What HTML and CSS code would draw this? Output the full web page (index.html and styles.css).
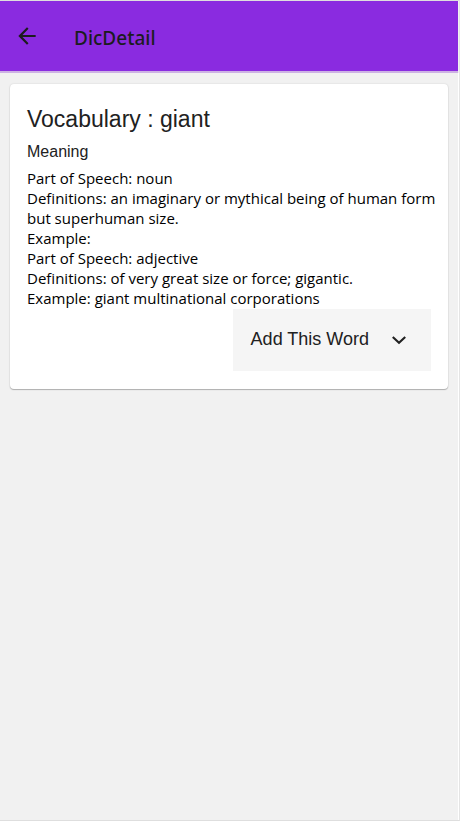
FILE: index.html
```html
<!DOCTYPE html>
<html lang="en">
<head>
<meta charset="utf-8">
<meta name="viewport" content="width=device-width, initial-scale=1">
<title>DicDetail</title>
<link rel="stylesheet" href="styles.css">
</head>
<body>
<div class="screen">
  <header class="app-bar">
    <button class="back" type="button" aria-label="Back">
      <svg viewBox="0 0 24 24" width="26" height="26" aria-hidden="true"><path d="M20 11H7.83l5.59-5.59L12 4l-8 8 8 8 1.41-1.41L7.83 13H20z" fill="currentColor"/></svg>
    </button>
    <h1 class="title">DicDetail</h1>
  </header>
  <main class="content">
    <article class="card">
      <h2 class="word">Vocabulary : giant</h2>
      <h3 class="label">Meaning</h3>
      <div class="meanings">
        <p>Part of Speech: noun</p>
        <p>Definitions: an imaginary or mythical being of human form but superhuman size.</p>
        <p>Example:</p>
        <p>Part of Speech: adjective</p>
        <p>Definitions: of very great size or force; gigantic.</p>
        <p>Example: giant multinational corporations</p>
      </div>
      <button class="add" type="button">
        <span>Add This Word</span>
        <svg viewBox="0 0 24 24" width="22" height="22" aria-hidden="true"><path d="M5.200 9.800l6.800 6.400L18.800 9.800" fill="none" stroke="currentColor" stroke-width="2.300"/></svg>
      </button>
    </article>
  </main>
</div>
</body>
</html>
```
FILE: styles.css
```css
* {
  box-sizing: border-box;
}

body {
  margin: 0;
  background: #fff;
  font-family: "Open Sans", "Noto Sans", sans-serif;
}

h1, h2, h3, p {
  margin: 0;
}

button {
  border: 0;
  font: inherit;
  cursor: pointer;
}

.screen {
  display: flex;
  flex-direction: column;
  min-height: calc(100vh - 1px);
  margin-bottom: 1px;
  border-top: 1px solid #dedede;
  border-bottom: 1px solid #dedede;
  border-right: 1px solid #e4e4e4;
  background: #f1f1f1;
}

.app-bar {
  display: flex;
  align-items: center;
  gap: 34px;
  height: 72px;
  margin-right: 1px;
  padding: 0 14px;
  border-bottom: 2px solid #cdb2e4;
  background: #8a2be0;
  color: #1c1c1e;
}

.back {
  display: flex;
  padding: 0;
  background: none;
  color: inherit;
}

.title {
  padding-top: 4px;
  font-family: "Noto Sans", sans-serif;
  font-size: 19px;
  font-weight: 500;
  line-height: 28px;
}

.content {
  flex: 1;
  margin-right: 1px;
  padding: 11px 10px 16px;
  box-shadow: 1px 0 #fff;
}

.card {
  display: flex;
  flex-direction: column;
  padding: 20px 17px 18px;
  border-radius: 4px;
  background: #fff;
  box-shadow: 0 1px 1px rgba(0, 0, 0, .25), 0 0 2px rgba(0, 0, 0, .14);
}

.word, .label, .add {
  font-family: "Liberation Sans", Arial, sans-serif;
  font-weight: 400;
  color: #212121;
}

.word {
  font-size: 23px;
  line-height: 30px;
}

.label {
  padding-top: 2px;
  font-size: 16px;
  line-height: 32px;
}

.meanings {
  margin-right: -8px;
  padding-bottom: 1px;
  font-size: 15px;
  line-height: 20px;
  color: #000;
}

.add {
  display: flex;
  align-items: center;
  align-self: flex-end;
  gap: 19px;
  height: 62px;
  padding: 0 21px 2px 18px;
  background: #f5f5f5;
  font-size: 18px;
}
```
